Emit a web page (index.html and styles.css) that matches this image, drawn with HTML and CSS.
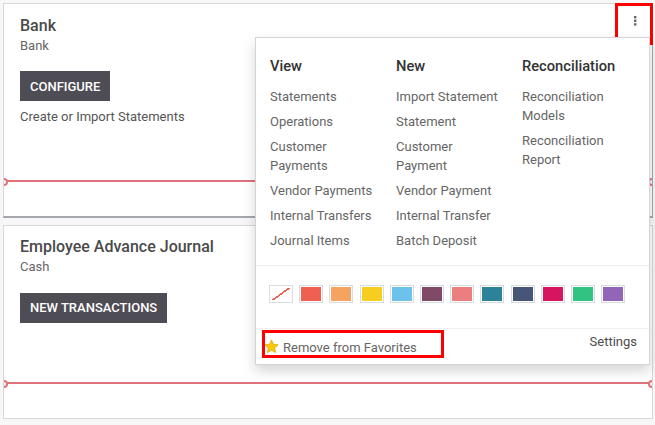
FILE: index.html
```html
<!DOCTYPE html>
<html>
<head>
  <meta charset="utf-8">
  <link rel="stylesheet" href="styles.css">
</head>
<body>
  <div class="board">
    <div class="card card-open">
      <div class="card-title">Bank</div>
      <div class="card-sub">Bank</div>
      <div class="card-actions">
        <button class="btn-dark">Configure</button>
      </div>
      <div class="card-link">Create or Import Statements</div>
      <div class="graph"><div class="graph-line"></div></div>

      <div class="kebab">
        <svg width="4" height="10" viewBox="0 0 4 10">
          <rect x="1" y="0" width="2.4" height="2.4" fill="#666"/>
          <rect x="1" y="3.6" width="2.4" height="2.4" fill="#666"/>
          <rect x="1" y="7.2" width="2.4" height="2.4" fill="#666"/>
        </svg>
      </div>

      <div class="dropdown">
        <div class="menu-cols">
          <div class="menu-col">
            <div class="menu-head">View</div>
            <a class="menu-item">Statements</a>
            <a class="menu-item">Operations</a>
            <a class="menu-item">Customer Payments</a>
            <a class="menu-item">Vendor Payments</a>
            <a class="menu-item">Internal Transfers</a>
            <a class="menu-item">Journal Items</a>
          </div>
          <div class="menu-col">
            <div class="menu-head">New</div>
            <a class="menu-item">Import Statement</a>
            <a class="menu-item">Statement</a>
            <a class="menu-item">Customer Payment</a>
            <a class="menu-item">Vendor Payment</a>
            <a class="menu-item">Internal Transfer</a>
            <a class="menu-item">Batch Deposit</a>
          </div>
          <div class="menu-col">
            <div class="menu-head">Reconciliation</div>
            <a class="menu-item">Reconciliation Models</a>
            <a class="menu-item">Reconciliation Report</a>
          </div>
        </div>

        <div class="colors">
          <span class="swatch swatch-none"></span>
          <span class="swatch" style="background-color:#f06050"></span>
          <span class="swatch" style="background-color:#f4a460"></span>
          <span class="swatch" style="background-color:#f7cd1f"></span>
          <span class="swatch" style="background-color:#6cc1ed"></span>
          <span class="swatch" style="background-color:#814968"></span>
          <span class="swatch" style="background-color:#eb7e7f"></span>
          <span class="swatch" style="background-color:#2c8397"></span>
          <span class="swatch" style="background-color:#475577"></span>
          <span class="swatch" style="background-color:#d6145f"></span>
          <span class="swatch" style="background-color:#30c381"></span>
          <span class="swatch" style="background-color:#9365b8"></span>
        </div>

        <div class="menu-foot">
          <a class="fav">
            <svg width="15" height="15" viewBox="0 0 24 24">
              <path d="M12 1.5l3.2 6.9 7.4.8-5.5 5.1 1.5 7.4L12 18l-6.6 3.7 1.5-7.4L1.4 9.2l7.4-.8z" fill="#f6c90e" stroke="#e0a800" stroke-width="1.2" stroke-linejoin="round"/>
            </svg>
            <span>Remove from Favorites</span>
          </a>
          <a class="settings">Settings</a>
          <span class="mark mark-fav"></span>
        </div>
      </div>
    </div>

    <div class="card">
      <div class="card-title">Employee Advance Journal</div>
      <div class="card-sub">Cash</div>
      <div class="card-actions">
        <button class="btn-dark">New Transactions</button>
      </div>
      <div class="graph"><div class="graph-line"></div></div>
    </div>
  </div>
</body>
</html>
```

FILE: styles.css
```css
body {
  margin: 0;
  padding: 3px 2px 0 3px;
  background: #f7f7f7;
  font-family: Roboto, "Noto Sans", sans-serif;
  font-size: 13px;
  color: #4c4c4c;
}

.board {
  width: 650px;
}

.card {
  position: relative;
  background: white;
  border: 1px solid #d8d8d8;
  padding-top: 10.5px;
  margin-bottom: 8px;
}

.card-open {
  border-right-color: #a4a8ad;
  border-bottom-color: #a4a8ad;
  box-shadow: 0 1px 0 #a4a8ad;
}

.card-title {
  padding: 0 16px;
  font-size: 16px;
  line-height: 21px;
  font-weight: 500;
  color: #4a4a4a;
}

.card-sub {
  padding: 0 16px;
  line-height: 19.5px;
  color: #666;
}

.card-actions {
  padding: 16px 16px 5.5px;
}

.btn-dark {
  height: 30px;
  padding: 0 10px;
  border: none;
  background: #4e4c55;
  color: white;
  font-family: inherit;
  font-size: 13px;
  font-weight: 500;
  text-transform: uppercase;
  cursor: pointer;
}

.card-link {
  padding: 0 16px;
  line-height: 19.5px;
  color: #555;
}

.graph {
  position: relative;
  height: 89.5px;
  overflow: hidden;
  padding-top: 54px;
  box-sizing: border-box;
}

.graph-line {
  height: 2px;
  background: #e07379;
}

.graph::before,
.graph::after {
  content: "";
  position: absolute;
  top: 51.5px;
  width: 4px;
  height: 4px;
  border: 2px solid #e07379;
  border-radius: 50%;
  background: white;
}

.graph::before { left: -4px; }
.graph::after { right: -4px; }

.kebab {
  position: absolute;
  top: -1px;
  right: -1px;
  width: 38px;
  height: 42px;
  box-sizing: border-box;
  border: 3px solid #ff0000;
  display: flex;
  justify-content: center;
  padding-top: 10px;
  padding-left: 1px;
}

.kebab svg {
  display: block;
}

.dropdown {
  position: absolute;
  top: 32.5px;
  left: 251px;
  width: 395px;
  box-sizing: border-box;
  background: white;
  border: 1px solid #d4d4d4;
  box-shadow: 0 6px 12px rgba(0,0,0,0.17);
  z-index: 10;
}

.menu-cols {
  display: flex;
  padding: 17px 0 12px 14px;
}

.menu-col {
  flex-shrink: 0;
  width: 126px;
  padding-right: 20px;
  box-sizing: border-box;
}

.menu-head {
  font-size: 14.7px;
  line-height: 22px;
  font-weight: 500;
  color: #333;
  margin-bottom: 7.5px;
  white-space: nowrap;
}

.menu-item {
  display: block;
  padding: 3px 0;
  line-height: 19px;
  color: #666;
  cursor: pointer;
}

.colors {
  display: flex;
  gap: 6.2px;
  padding: 19px 13px 25px;
  border-top: 1px solid #ececec;
  border-bottom: 1px solid #f0f0f0;
}

.swatch {
  width: 24px;
  height: 18px;
  box-sizing: border-box;
  border: 1px solid #d9dce0;
  box-shadow: inset 0 0 0 1px white;
  background: white;
}

.swatch-none {
  background: linear-gradient(to bottom right, transparent calc(50% - 0.8px), #f06050 calc(50% - 0.8px), #f06050 calc(50% + 0.8px), transparent calc(50% + 0.8px));
  box-shadow: inset 0 0 0 2px white;
}

.menu-foot {
  position: relative;
  display: flex;
  justify-content: space-between;
  align-items: flex-start;
  padding: 0 12px 7px 8px;
}

.fav {
  display: flex;
  align-items: center;
  gap: 4px;
  padding-top: 8.5px;
  line-height: 19.5px;
  color: #666;
  cursor: pointer;
}

.fav svg {
  margin-top: -1px;
}

.settings {
  padding-top: 3px;
  line-height: 19.5px;
  color: #4c4c4c;
  cursor: pointer;
}

.mark {
  position: absolute;
  border: 3px solid #ff0000;
  box-sizing: border-box;
}

.mark-fav {
  left: 6px;
  top: 1px;
  width: 182px;
  height: 28px;
}
```
